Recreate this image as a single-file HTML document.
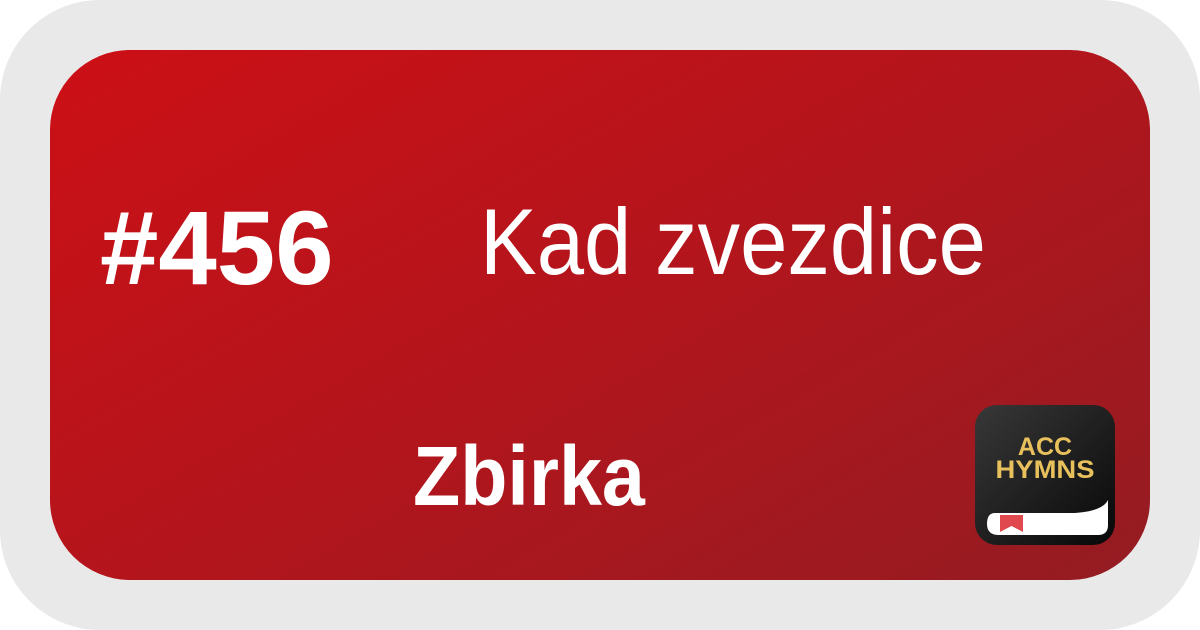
<!DOCTYPE html>
<html><head><meta charset="utf-8"><style>
html,body{margin:0;padding:0;background:#fff;}
.outer{position:absolute;left:0;top:0;width:1200px;height:630px;background:#e9e9e9;border-radius:100px;overflow:hidden;}
.card{position:absolute;left:50px;top:50px;width:1100px;height:530px;border-radius:80px;background:linear-gradient(150deg,#cc1016 0%,#b3151c 50%,#931c22 100%);}
.t{position:absolute;color:#fff;font-family:"Liberation Sans",sans-serif;white-space:nowrap;line-height:1;transform-origin:left top;}
</style></head><body>
<div class="outer"><div class="card"></div></div>
<div class="t" style="left:100px;top:196px;font-size:105px;font-weight:bold;">#456</div>
<div class="t" style="left:480px;top:195px;font-size:94px;transform:scaleX(0.905);">Kad zvezdice</div>
<div class="t" style="left:413px;top:434px;font-size:84px;font-weight:bold;transform:scaleX(0.92);">Zbirka</div>
<svg style="position:absolute;left:975px;top:405px" width="140" height="140" viewBox="0 0 140 140">
<defs><linearGradient id="g" x1="0" y1="0" x2="1" y2="1"><stop offset="0" stop-color="#383838"/><stop offset="1" stop-color="#080808"/></linearGradient></defs>
<rect x="0" y="0" width="140" height="140" rx="22" fill="url(#g)"/>
<path d="M20 108 H100 Q128 106 133 95 V120 Q133 130 123 130 H24 Q12 130 12 119 Q12 108 20 108 Z" fill="#fff"/>
<path d="M25 110 H48 V127 L36.5 121 L25 127 Z" fill="#e04a4f"/>
<text x="70" y="50" text-anchor="middle" font-family="Liberation Sans,sans-serif" font-weight="bold" font-size="25" fill="#e8c15c">ACC</text>
<text x="70" y="73" text-anchor="middle" font-family="Liberation Sans,sans-serif" font-weight="bold" font-size="25" fill="#e8c15c" textLength="99" lengthAdjust="spacingAndGlyphs">HYMNS</text>
</svg>
</body></html>
